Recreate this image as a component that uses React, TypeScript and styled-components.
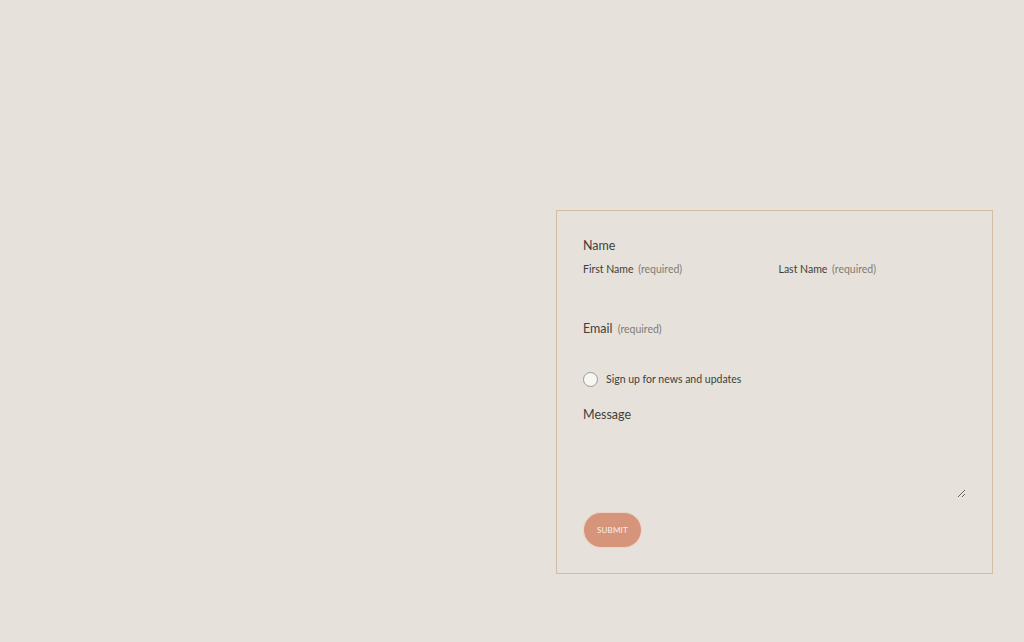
import React from "react";
import styled, { createGlobalStyle } from "styled-components";

const GlobalStyle = createGlobalStyle`
    html, body {
        margin: 0;
        padding: 0;
        background: #e6e2db;
    }
    body {
        font-family: Lato, "Noto Sans", "Liberation Sans", sans-serif;
        color: #3f3e3b;
    }
`;

const App = () => {
    return (
        <>
            <GlobalStyle />
            <Page>
                <Spacer />
                <FormBox onSubmit={(e) => e.preventDefault()}>
                    <Fieldset>
                        <Legend>Name</Legend>
                        <NameGrid>
                            <Field>
                                <SmallLabel>
                                    First Name <Req>(required)</Req>
                                </SmallLabel>
                                <TextInput type="text" />
                            </Field>
                            <Field>
                                <SmallLabel>
                                    Last Name <Req>(required)</Req>
                                </SmallLabel>
                                <TextInput type="text" />
                            </Field>
                        </NameGrid>
                    </Fieldset>

                    <Field>
                        <Label>
                            Email <Req>(required)</Req>
                        </Label>
                        <TextInput type="email" />
                    </Field>

                    <CheckRow>
                        <Radio type="checkbox" />
                        <CheckText>Sign up for news and updates</CheckText>
                    </CheckRow>

                    <Field>
                        <Label $gap={19}>Message</Label>
                        <MessageArea />
                    </Field>

                    <SubmitButton type="submit">Submit</SubmitButton>
                </FormBox>
            </Page>
        </>
    );
};

export default App;

const Page = styled.div`
    display: grid;
    grid-template-columns: 1fr 437px;
    padding: 210px 31px 0 0;
    min-height: 642px;
    box-sizing: border-box;
`;

const Spacer = styled.div``;

const FormBox = styled.form`
    align-self: start;
    display: flex;
    flex-direction: column;
    border: 1px solid #d5bca4;
    padding: 26px;
    height: 364px;
    box-sizing: border-box;
`;

const Fieldset = styled.fieldset`
    border: none;
    margin: 0;
    padding: 0;
    min-width: 0;
`;

const Legend = styled.legend`
    padding: 0;
    font-size: 12.5px;
    line-height: 18px;
    margin-bottom: 6px;
`;

const NameGrid = styled.div`
    display: grid;
    grid-template-columns: minmax(0, 1fr) minmax(0, 1fr);
    column-gap: 8px;
    margin-bottom: 15px;
`;

const Field = styled.div`
    display: flex;
    flex-direction: column;
    min-width: 0;
`;

const SmallLabel = styled.label`
    font-size: 10.5px;
    line-height: 16px;
    white-space: nowrap;
`;

const Label = styled.label<{ $gap?: number }>`
    font-size: 12.5px;
    line-height: 18px;
    margin-top: ${(p) => p.$gap ?? 0}px;
    span {
        font-size: 10.5px;
        margin-left: 2px;
    }
`;

const Req = styled.span`
    color: #7f7b75;
    margin-left: 2px;
`;

const TextInput = styled.input`
    width: 100%;
    min-width: 0;
    height: 28px;
    border: none;
    background: transparent;
    outline: none;
    padding: 0;
    font: inherit;
    box-sizing: border-box;
`;

const CheckRow = styled.label`
    display: flex;
    align-items: center;
    gap: 8px;
    margin-top: 5px;
    height: 16px;
`;

const Radio = styled.input`
    appearance: none;
    margin: 0;
    width: 15px;
    height: 15px;
    border-radius: 50%;
    border: 1px solid #9c9892;
    background: #f8f6f2;
    box-sizing: border-box;
`;

const CheckText = styled.span`
    font-size: 10.5px;
    line-height: 16px;
`;

const MessageArea = styled.textarea`
    margin-top: 4px;
    height: 70px;
    border: none;
    background: transparent;
    outline: none;
    resize: vertical;
    padding: 0;
    font: inherit;
    box-sizing: border-box;
`;

const SubmitButton = styled.button`
    align-self: flex-start;
    margin: 15px 0 0 1px;
    width: 57px;
    height: 34px;
    border: none;
    border-radius: 17px;
    background: #d6957b;
    box-shadow: 0 0 0 1px #ecd3c6;
    color: #fbeee8;
    font-family: Lato, "Noto Sans", sans-serif;
    font-size: 8px;
    letter-spacing: 0.2px;
    text-transform: uppercase;
    cursor: pointer;
    padding: 0;
`;
